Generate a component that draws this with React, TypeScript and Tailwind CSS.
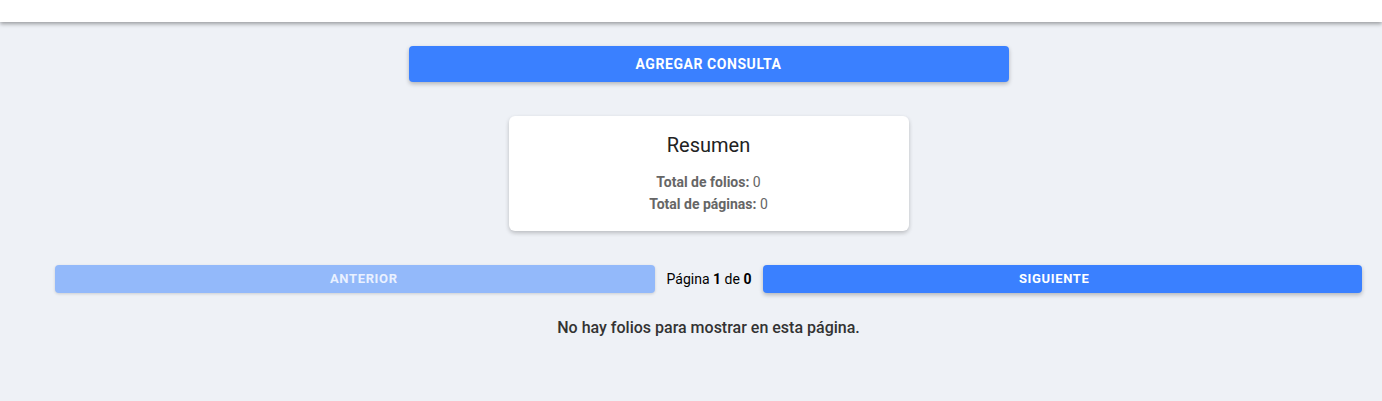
export default function App() {
  return (
    <div className="min-h-[401px] bg-[#eef1f6] font-['Roboto',sans-serif]">
      <header className="h-[22px] bg-white shadow-[0_2px_4px_rgba(0,0,0,0.35)]" />

      <main className="pl-[55px] pr-5 pt-6 flex flex-col items-center">
        <button
          type="button"
          className="w-[600px] h-9 rounded bg-[#3a80ff] text-white text-[14px] font-bold tracking-[0.04em] uppercase shadow-[0_2px_4px_rgba(0,0,0,0.25)]"
        >
          Agregar consulta
        </button>

        <section className="mt-[34px] w-[400px] h-[115px] rounded-md bg-white shadow-[0_2px_4px_rgba(0,0,0,0.22)] flex flex-col items-center pt-[17px]">
          <h2 className="text-[20px] leading-6 text-[#222]">Resumen</h2>
          <div className="mt-[14px] text-[14px] leading-[22px] text-[#666] text-center">
            <p>
              <span className="font-bold">Total de folios:</span> 0
            </p>
            <p>
              <span className="font-bold">Total de páginas:</span> 0
            </p>
          </div>
        </section>

        <div className="mt-[34px] w-full flex items-center gap-3">
          <button
            type="button"
            disabled
            className="flex-1 h-7 pl-[18px] rounded bg-[#93b9fa] text-[#eaf1ff] text-[13px] font-bold tracking-[0.05em] uppercase shadow-[0_1px_3px_rgba(0,0,0,0.15)]"
          >
            Anterior
          </button>
          <span className="text-[14px] text-black whitespace-nowrap">
            Página <span className="font-bold">1</span> de <span className="font-bold">0</span>
          </span>
          <button
            type="button"
            className="flex-1 h-7 pr-[17px] rounded bg-[#3a80ff] text-white text-[13px] font-bold tracking-[0.05em] uppercase shadow-[0_2px_4px_rgba(0,0,0,0.25)]"
          >
            Siguiente
          </button>
        </div>

        <p className="mt-[23px] text-[16px] font-medium text-[#333]">
          No hay folios para mostrar en esta página.
        </p>
      </main>
    </div>
  );
}
